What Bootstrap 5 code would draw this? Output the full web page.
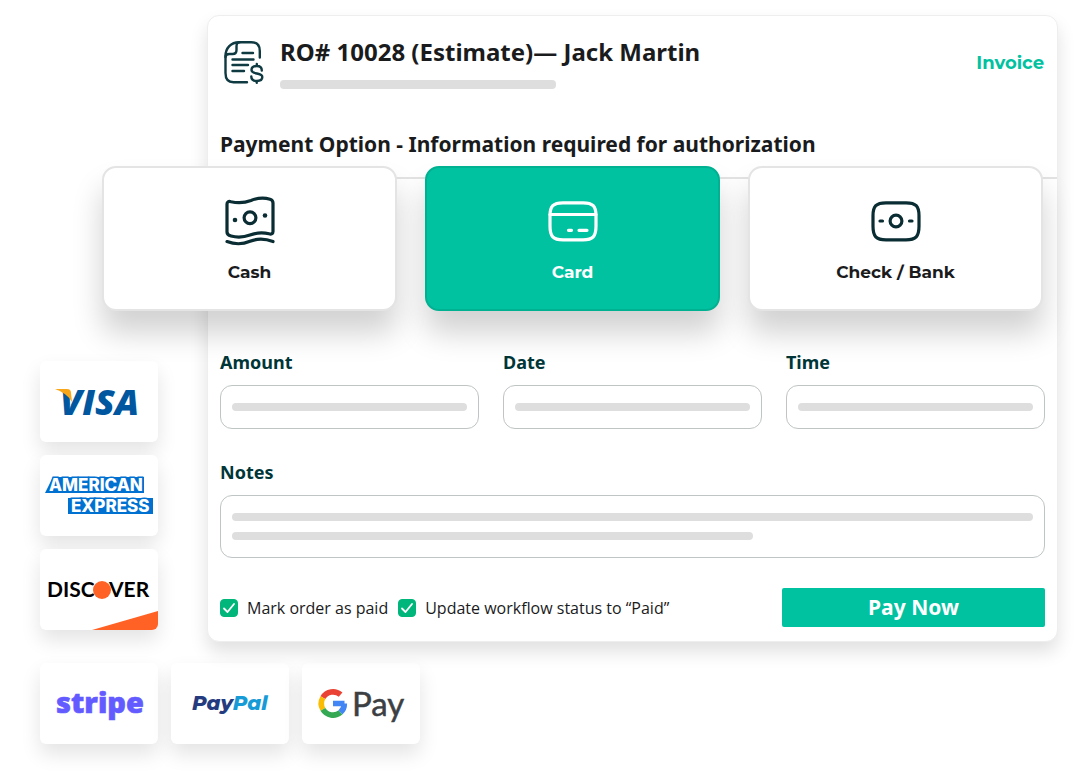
<!DOCTYPE html>
<html lang="en">
<head>
<meta charset="utf-8">
<meta name="viewport" content="width=device-width, initial-scale=1">
<title>RO# 10028 – Payment</title>
<link rel="stylesheet" href="https://cdn.jsdelivr.net/npm/bootstrap@5.3.0/dist/css/bootstrap.min.css">
<style>
  :root { --brand: #00c2a0; --ink: #1a1b1d; --deep: #003638; --bar: #dedede; }
  body { font-family: "Noto Sans", "Open Sans", sans-serif; color: var(--ink); background: #fff; }
  .page { padding: 15px 22px 31px 40px; }
  .upper { gap: 49px; }
  .logos { gap: 13px; }
  .side { padding-bottom: 12px; }
  .below { margin-top: 21px; }
  .logo-tile { width: 118px; height: 81px; border-radius: 6px; background: #fff; overflow: hidden; box-shadow: 0 10px 20px rgba(0,0,0,.11); }
  .logo-tile svg { display: block; }
  .panel { min-width: 0; border: 1px solid #eee; border-radius: 12px; box-shadow: 0 10px 18px rgba(0,0,0,.12); }
  .panel-head { padding: 24px 13px 17px 12px; border-bottom: 2px solid #e3e3e3; }
  .title { font-size: 24px; line-height: 24px; font-weight: 700; margin: 0; }
  .subtitle { font-size: 21px; line-height: 32px; font-weight: 700; margin: 39px 0 0; }
  .bar { display: block; height: 8px; border-radius: 4px; background: var(--bar); pointer-events: none; }
  .title-bar { width: 276px; height: 9px; margin-top: 16px; }
  .invoice { font: 700 18px/24px Montserrat, Inter, sans-serif; color: var(--brand); text-decoration: none; padding-bottom: 4px; }
  .options { gap: 28px; margin: -13px 14px 0 -106px; position: relative; }
  .option { height: 145px; padding: 28px 8px 24px; gap: 14px; border: 2px solid #e4e4e4; border-radius: 14px; background: #fff; color: var(--ink); font: 700 17px/24px Montserrat, Inter, sans-serif; box-shadow: 0 22px 30px rgba(0,0,0,.18); }
  .option svg { color: #0a2c33; flex: none; }
  .option.active { background: var(--brand); border-color: #00b191; color: #fff; }
  .option.active svg { color: #fff; }
  .panel-form { padding: 39px 12px 14px 12px; }
  .fields { --bs-gutter-x: 24px; --bs-gutter-y: 31px; }
  .field-label { display: block; font-size: 18px; line-height: 24px; font-weight: 700; color: var(--deep); margin-bottom: 11px; }
  .stack { display: grid; align-items: center; }
  .stack > * { grid-area: 1 / 1; }
  .stack .bars { margin: 0 12px; display: grid; gap: 11px; pointer-events: none; }
  .stack .form-control { height: 44px; border: 1px solid #bfc4c4; border-radius: 12px; background: #fff; }
  .stack textarea.form-control { height: 63px; resize: none; }
  .short { width: 65%; }
  .panel-foot { margin-top: 30px; }
  .checks { gap: 10px; }
  .check { gap: 9px; font-family: "Open Sans", sans-serif; font-size: 16px; line-height: 24px; }
  .check input { margin: 0; width: 18px; height: 18px; border-radius: 4px; }
  .check input:checked { background-color: #00b67a; border-color: #00b67a; background-size: 18px 18px;
    background-image: url("data:image/svg+xml,%3Csvg xmlns='http://www.w3.org/2000/svg' viewBox='0 0 18 18'%3E%3Cpath fill='none' stroke='%23fff' stroke-width='1.800' stroke-linecap='round' stroke-linejoin='round' d='M4 9.500l3.500 3.500L14 5'/%3E%3C/svg%3E"); }
  .pay { width: 263px; height: 39px; padding: 0; border: 0; border-radius: 2px; background: var(--brand); color: #fff; font-size: 21px; line-height: 39px; font-weight: 700; }
</style>
</head>
<body>
<main class="page">
  <div class="upper d-flex">
    <aside class="side logos d-flex flex-column justify-content-end" aria-label="Accepted cards">
      <div class="logo-tile">
        <svg width="118" height="81" viewBox="0 0 118 81">
          <text x="20" y="54" font-family="Open Sans, sans-serif" font-weight="800" font-style="italic" font-size="36" fill="#00579f">VISA</text>
          <path d="M15 28h12q4 0 4 4l1 9q-5-9-17-13z" fill="#faa61a"/>
        </svg>
      </div>
      <div class="logo-tile">
        <svg width="118" height="81" viewBox="0 0 118 81" font-family="Inter, sans-serif" font-weight="800" font-size="17" fill="#fff" stroke="#0070d1" stroke-width="3" paint-order="stroke">
          <path d="M13 22h91v16H5l5-10z" fill="#0070d1" stroke="none"/>
          <path d="M28 43h85v16H28z" fill="#0070d1" stroke="none"/>
          <text x="9" y="36">AMERICAN</text>
          <text x="31" y="57">EXPRESS</text>
        </svg>
      </div>
      <div class="logo-tile">
        <svg width="118" height="81" viewBox="0 0 118 81" font-family="Lato, sans-serif" font-weight="700" font-size="21" fill="#000">
          <text x="7" y="48">DISC</text>
          <text x="69" y="48">VER</text>
          <circle cx="62" cy="41" r="9" fill="#ff6224"/>
          <path d="M52 81l66-19v19z" fill="#ff6224"/>
        </svg>
      </div>
    </aside>

    <section class="panel card flex-grow-1">
      <header class="panel-head">
        <div class="d-flex align-items-center">
          <svg class="flex-shrink-0 align-self-start ms-1 me-3" width="40" height="44" viewBox="0 0 40 44" fill="none" stroke="#0f3a42" stroke-width="2.400" stroke-linecap="round" stroke-linejoin="round">
            <path d="M35.800 17.500V11c0-6-3-8.800-8.800-8.800H15C7 2.200 1.500 8 1.500 16v17c0 6 3 9.300 8 9.300H23"/>
            <path d="M1.500 17c0-2 1-3 4-3h3c3 0 4-1 4-4V6.500c0-3 1-4.300 3-4.300M18.500 13H29M8.500 19.500H29.500M8.500 25H24M8.500 31H20"/>
            <path d="M37.800 30.500c0-3-2-4.500-5-4.500s-5.300 1.500-5.300 4c0 5 10.800 2 10.800 7 0 3-2.500 4-5.500 4s-5.500-1.500-5.500-4.500M32.800 24v2M32.800 41v1.800"/>
          </svg>
          <div class="flex-grow-1">
            <h1 class="title">RO# 10028 (Estimate)— Jack Martin</h1>
            <span class="bar title-bar"></span>
          </div>
          <a class="invoice" href="#">Invoice</a>
        </div>
        <h2 class="subtitle">Payment Option - Information required for authorization</h2>
      </header>

      <div class="options d-flex">
        <button type="button" class="option flex-fill w-100 d-flex flex-column align-items-center">
          <svg width="50" height="50" viewBox="0 0 50 50" fill="none" stroke="currentColor" stroke-width="3.200" stroke-linecap="round" stroke-linejoin="round">
            <path d="M2 8c0-2 1.500-3 4-2.300 8 1.700 14 1 20-1.200 6-2.400 13-3 19-1.300 2 .6 3 1.800 3 3.800v28.500c0 2-1.500 3-4 2.300-7-1.800-13-1-19 1.200s-13 2.600-19 1c-3-.8-4-2-4-4z"/>
            <path d="M2 45.600c8 3 16 2.700 23-.3 7-2.800 15-2.800 23 .3"/>
            <circle cx="25" cy="21.700" r="5.900"/>
            <circle cx="10" cy="24" r="2.300" fill="currentColor" stroke="none"/><circle cx="40" cy="19.500" r="2.300" fill="currentColor" stroke="none"/>
          </svg>
          <span>Cash</span>
        </button>
        <button type="button" class="option active flex-fill w-100 d-flex flex-column align-items-center" aria-pressed="true">
          <svg width="50" height="50" viewBox="0 0 50 50" fill="none" stroke="currentColor" stroke-width="3.200" stroke-linecap="round">
            <path d="M15 6.800h20c10 0 13 3.500 13 13v10.500c0 10-3 13.500-13 13.500H15c-10 0-13-3.500-13-13.500V19.800c0-9.500 3-13 13-13z"/>
            <path d="M2 18.500h46M20.500 34.300h3M31 34.300h8"/>
          </svg>
          <span>Card</span>
        </button>
        <button type="button" class="option flex-fill w-100 d-flex flex-column align-items-center">
          <svg width="50" height="50" viewBox="0 0 50 50" fill="none" stroke="currentColor" stroke-width="3.200" stroke-linecap="round">
            <path d="M15 6.800h20c10 0 13 3.500 13 13v10.500c0 10-3 13.500-13 13.500H15c-10 0-13-3.500-13-13.500V19.800c0-9.500 3-13 13-13z"/>
            <circle cx="25" cy="25" r="5.900"/>
            <path d="M9 25h2.500M38.500 25H41"/>
          </svg>
          <span>Check / Bank</span>
        </button>
      </div>

      <form class="panel-form">
        <div class="row fields mt-0">
          <div class="col-4 mt-0">
            <label class="field-label" for="amount">Amount</label>
            <div class="stack"><input class="form-control" id="amount" type="text"><div class="bars"><span class="bar"></span></div></div>
          </div>
          <div class="col-4 mt-0">
            <label class="field-label" for="date">Date</label>
            <div class="stack"><input class="form-control" id="date" type="text"><div class="bars"><span class="bar"></span></div></div>
          </div>
          <div class="col-4 mt-0">
            <label class="field-label" for="time">Time</label>
            <div class="stack"><input class="form-control" id="time" type="text"><div class="bars"><span class="bar"></span></div></div>
          </div>
          <div class="col-12">
            <label class="field-label" for="notes">Notes</label>
            <div class="stack"><textarea class="form-control" id="notes"></textarea><div class="bars"><span class="bar"></span><span class="bar short"></span></div></div>
          </div>
        </div>
        <div class="panel-foot d-flex align-items-center justify-content-between">
          <div class="checks d-flex">
            <label class="check d-flex align-items-center" for="paid"><input class="form-check-input" type="checkbox" id="paid" checked>Mark order as paid</label>
            <label class="check d-flex align-items-center" for="status"><input class="form-check-input" type="checkbox" id="status" checked>Update workflow status to “Paid”</label>
          </div>
          <button type="button" class="pay btn">Pay Now</button>
        </div>
      </form>
    </section>
  </div>

  <div class="below logos d-flex">
    <div class="logo-tile">
      <svg width="118" height="81" viewBox="0 0 118 81">
        <text x="16" y="50" font-family="Open Sans, sans-serif" font-weight="800" font-size="29" fill="#635bff" stroke="#635bff" stroke-width=".6">stripe</text>
      </svg>
    </div>
    <div class="logo-tile">
      <svg width="118" height="81" viewBox="0 0 118 81">
        <text x="21" y="47" font-family="Montserrat, Lato, sans-serif" font-weight="800" font-style="italic" font-size="20" fill="#253b80">Pay<tspan fill="#179bd7">Pal</tspan></text>
      </svg>
    </div>
    <div class="logo-tile">
      <svg width="118" height="81" viewBox="0 0 118 81">
        <g fill="none" stroke-width="5.600">
          <path d="M20.900 34.600A11.700 11.700 0 0 1 38.600 31.700" stroke="#ea4335"/>
          <path d="M20.900 46.400A11.700 11.700 0 0 1 20.900 34.600" stroke="#fbbc04"/>
          <path d="M38.500 49.400A11.700 11.700 0 0 1 20.900 46.400" stroke="#34a853"/>
          <path d="M31 40.500H42.500M42.300 40.500A11.700 11.700 0 0 1 38.500 49.400" stroke="#4285f4"/>
        </g>
        <text x="50" y="53" font-family="Lato, sans-serif" font-size="33" fill="#3c4043" stroke="#3c4043" stroke-width=".5">Pay</text>
      </svg>
    </div>
  </div>
</main>
<script src="https://cdn.jsdelivr.net/npm/bootstrap@5.3.0/dist/js/bootstrap.bundle.min.js"></script>
</body>
</html>
